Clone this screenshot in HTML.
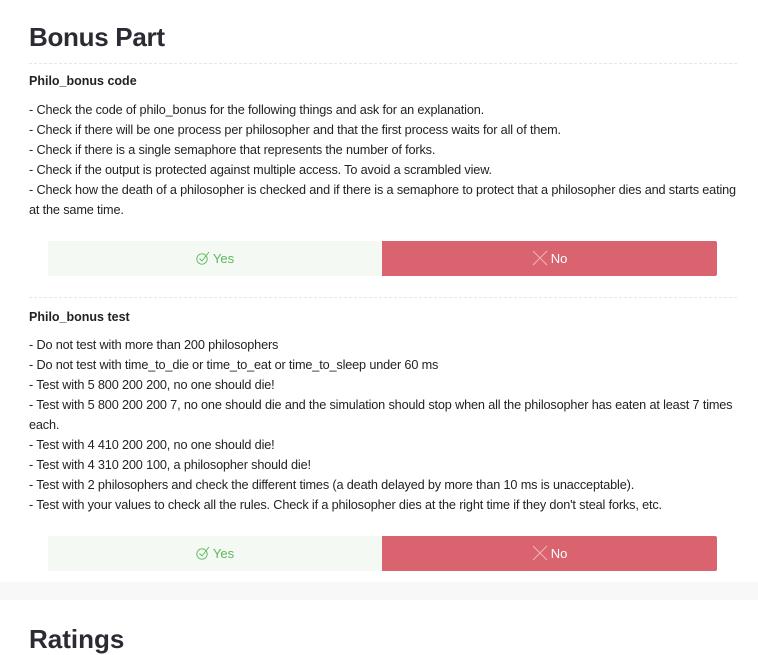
<!DOCTYPE html>
<html><head><meta charset="utf-8"><style>
body{margin:0;background:#fff;font-family:"Liberation Sans",sans-serif;color:#222;width:758px;height:631px;overflow:hidden;position:relative}
.a{position:absolute}
h1{position:absolute;left:29px;top:22px;margin:0;font-size:26px;font-weight:bold;color:#2b2b33;letter-spacing:-0.3px}
.hr{position:absolute;left:29px;width:708px;border-top:1px dashed #e6e6e6;height:0}
.t{position:absolute;left:29px;font-size:12.5px;font-weight:bold;color:#222}
.p{position:absolute;left:29px;width:708px;font-size:12.7px;line-height:20px;color:#222;letter-spacing:-0.15px}
.y{position:absolute;left:48px;width:334px;height:35px;background:#f4f9f4;color:#5cb85c;font-size:13px;text-align:center;line-height:35px}
.n{position:absolute;left:382px;width:335px;height:35px;background:#d9646f;color:#fff;font-size:13px;text-align:center;line-height:35px;border-radius:0 2px 2px 0}
svg{vertical-align:middle;margin-right:3px;position:relative;top:-2px}
</style></head><body>
<h1>Bonus Part</h1>
<div class="hr" style="top:63px"></div>
<div class="t" style="top:74px">Philo_bonus code</div>
<div class="p" style="top:100px">- Check the code of philo_bonus for the following things and ask for an explanation.<br>- Check if there will be one process per philosopher and that the first process waits for all of them.<br>- Check if there is a single semaphore that represents the number of forks.<br>- Check if the output is protected against multiple access. To avoid a scrambled view.<br>- Check how the death of a philosopher is checked and if there is a semaphore to protect that a philosopher dies and starts eating at the same time.</div>
<div class="y" style="top:241px"><svg width="14" height="14" viewBox="0 0 14 14" fill="none" stroke="#5cb85c" stroke-width="0.9"><circle cx="6" cy="8" r="5.2"/><path d="M3.5 7.5l2.5 2.5L13 1"/></svg>Yes</div>
<div class="n" style="top:241px"><svg width="16" height="16" viewBox="0 0 16 16" stroke="#f3b4ba" stroke-width="1"><path d="M1 1L15 15M15 1L1 15"/></svg>No</div>
<div class="hr" style="top:297px"></div>
<div class="t" style="top:310px">Philo_bonus test</div>
<div class="p" style="top:335px">- Do not test with more than 200 philosophers<br>- Do not test with time_to_die or time_to_eat or time_to_sleep under 60 ms<br>- Test with 5 800 200 200, no one should die!<br>- Test with 5 800 200 200 7, no one should die and the simulation should stop when all the philosopher has eaten at least 7 times each.<br>- Test with 4 410 200 200, no one should die!<br>- Test with 4 310 200 100, a philosopher should die!<br>- Test with 2 philosophers and check the different times (a death delayed by more than 10 ms is unacceptable).<br>- Test with your values to check all the rules. Check if a philosopher dies at the right time if they don't steal forks, etc.</div>
<div class="y" style="top:536px"><svg width="14" height="14" viewBox="0 0 14 14" fill="none" stroke="#5cb85c" stroke-width="0.9"><circle cx="6" cy="8" r="5.2"/><path d="M3.5 7.5l2.5 2.5L13 1"/></svg>Yes</div>
<div class="n" style="top:536px"><svg width="16" height="16" viewBox="0 0 16 16" stroke="#f3b4ba" stroke-width="1"><path d="M1 1L15 15M15 1L1 15"/></svg>No</div>
<div class="a" style="left:0;top:582px;width:758px;height:18px;background:#f8f8f8"></div>
<div class="a" style="left:29px;top:624px;font-size:26px;font-weight:bold;color:#2b2b33">Ratings</div>
</body></html>
